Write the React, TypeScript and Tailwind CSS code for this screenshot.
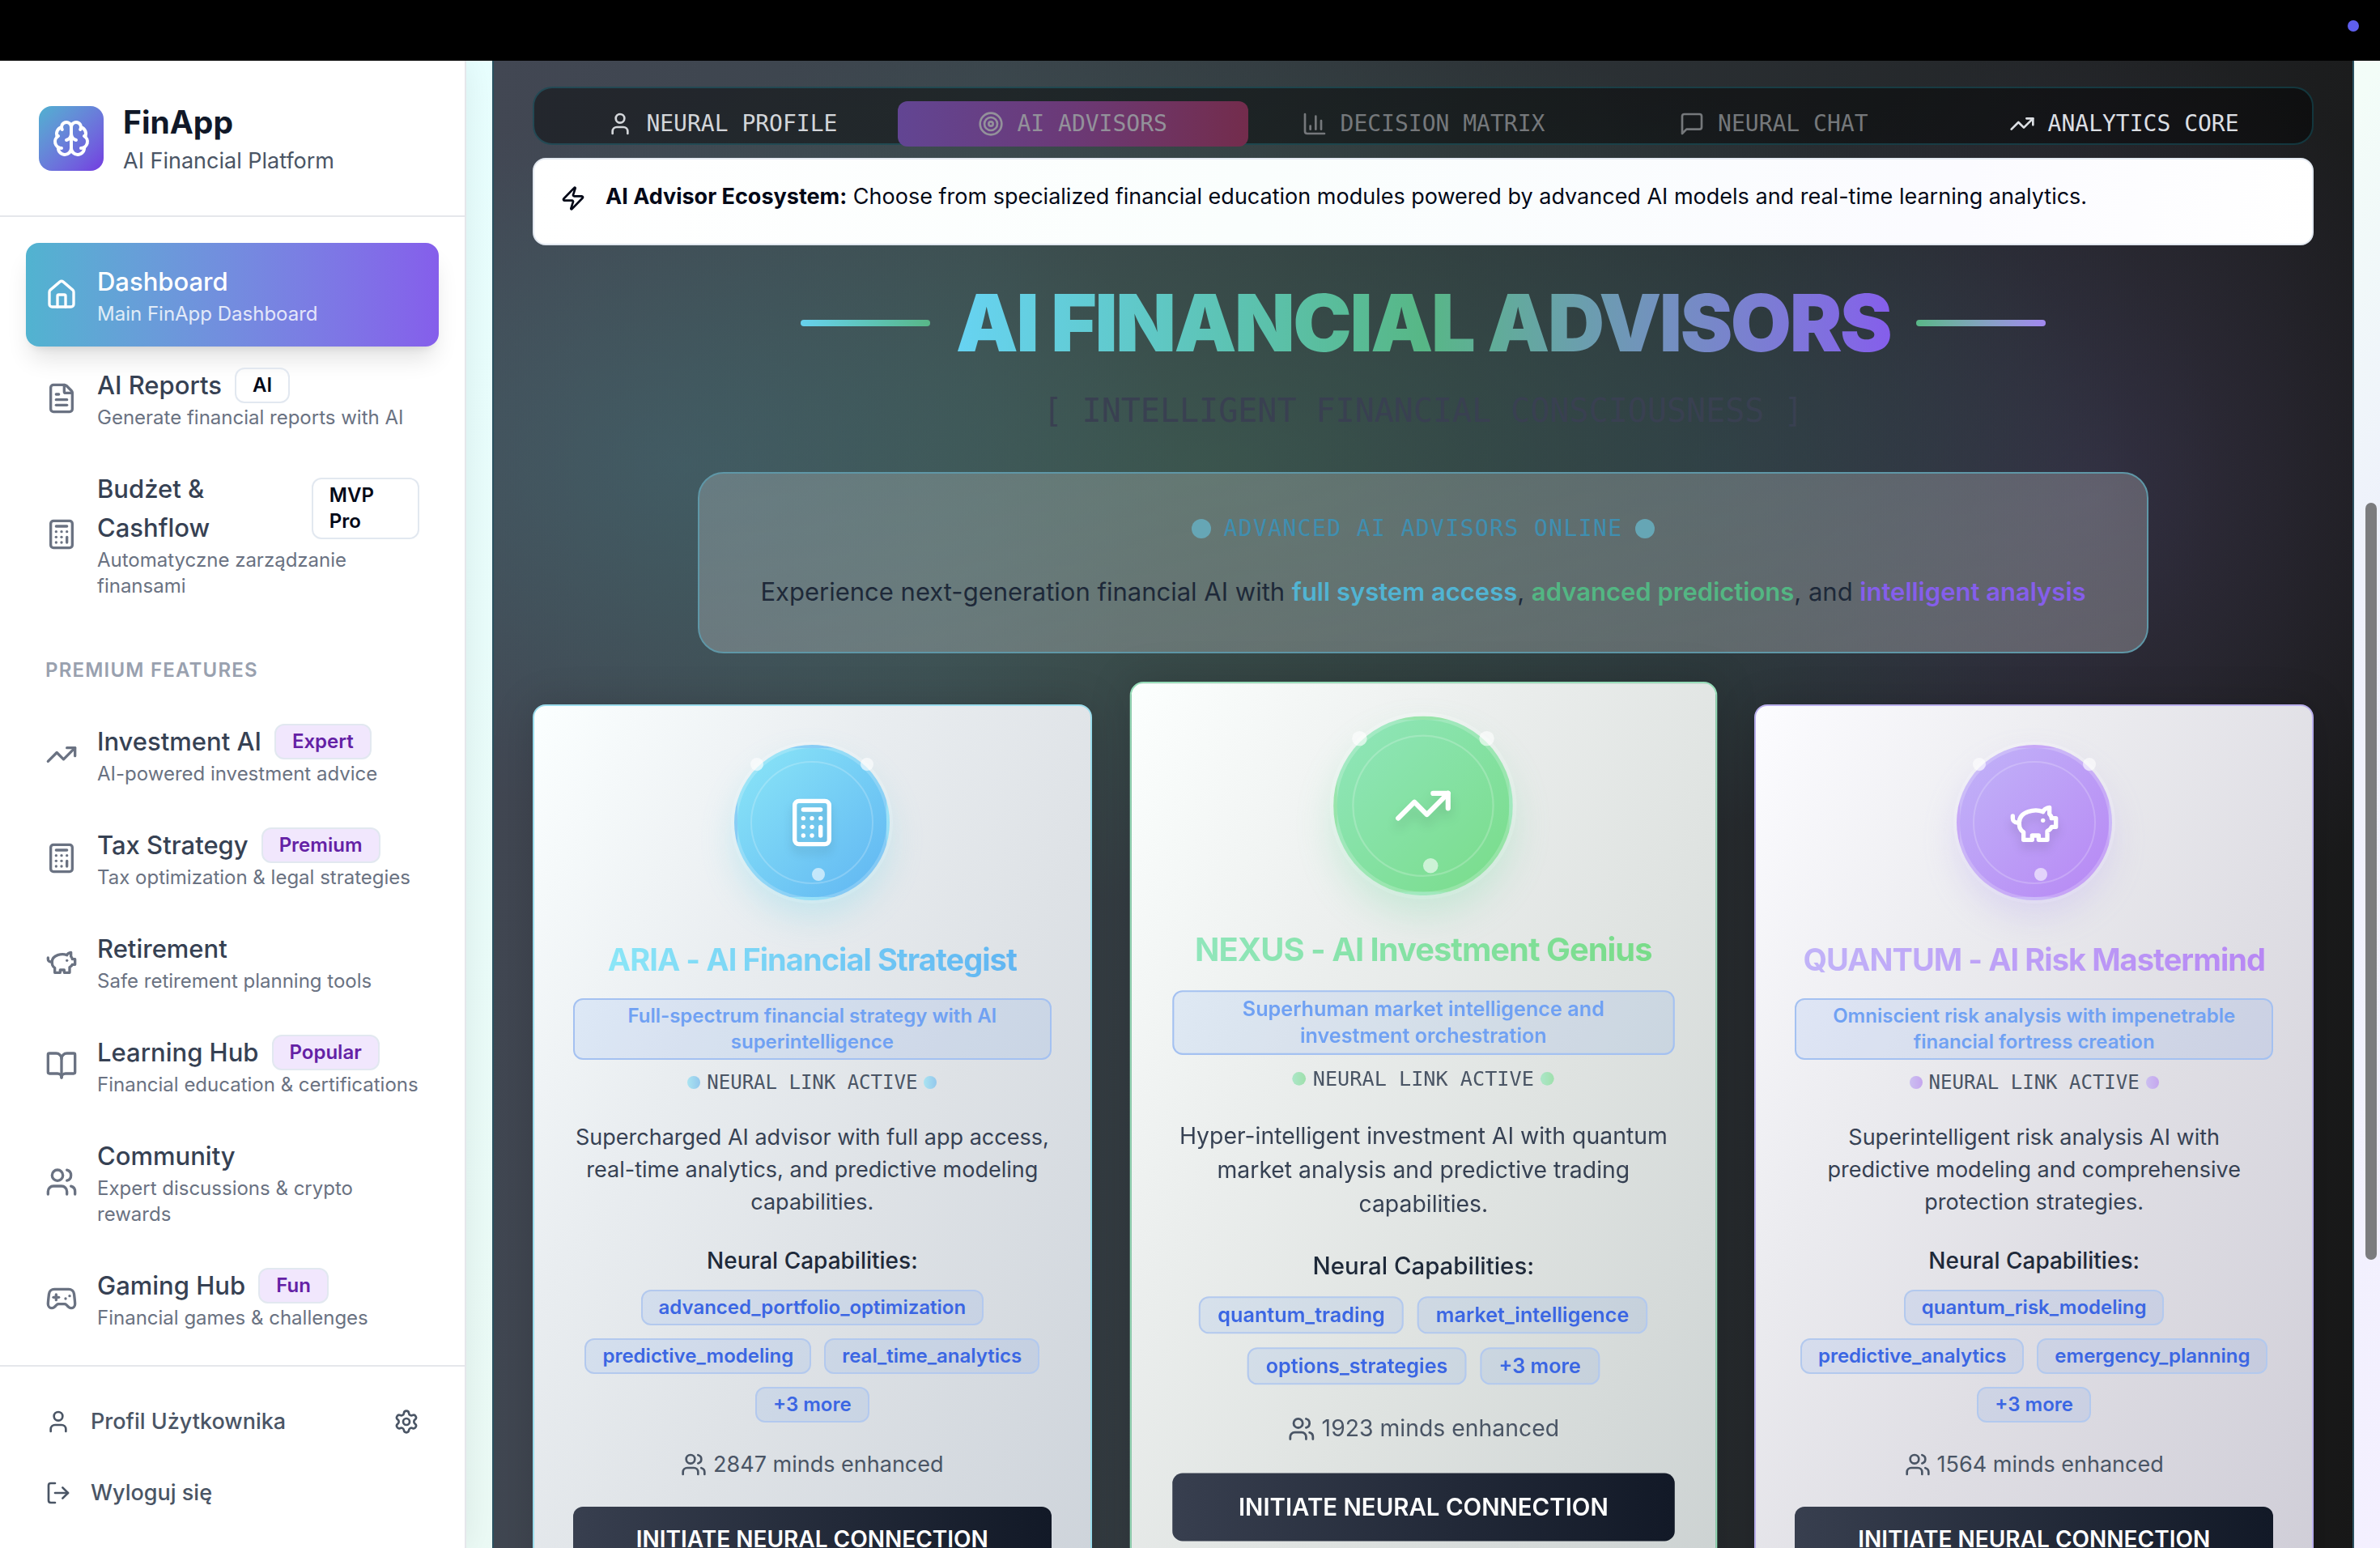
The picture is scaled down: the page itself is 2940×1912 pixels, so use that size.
import React from "react";
import {
  BookOpen,
  Brain,
  Calculator,
  ChartColumn,
  FileText,
  Gamepad2,
  House,
  LogOut,
  Settings,
  Target,
  TrendingUp,
  User,
  Users,
  Zap,
} from "lucide-react";
import clsx from "clsx";

type IconType = React.ComponentType<{ className?: string }>;

function PiggyBank({ className }: { className?: string }) {
  return (
    <svg
      viewBox="0 0 24 24"
      fill="none"
      stroke="currentColor"
      strokeWidth="2"
      strokeLinecap="round"
      strokeLinejoin="round"
      aria-hidden="true"
      className={className}
    >
      <path d="M19 5c-1.5 0-2.8 1.4-3 2-3.5-1.5-11-.3-11 5 0 1.8 0 3 2 4.5V20h4v-2h3v2h4v-4c1-.5 1.7-1 2-2h2v-4h-2c0-1-.5-1.5-1-2V5z" />
      <path d="M2 9v1c0 1.1.9 2 2 2h1" />
      <path d="M16 11h.01" />
    </svg>
  );
}

function MessageSquare({ className }: { className?: string }) {
  return (
    <svg
      viewBox="0 0 24 24"
      fill="none"
      stroke="currentColor"
      strokeWidth="2"
      strokeLinecap="round"
      strokeLinejoin="round"
      aria-hidden="true"
      className={className}
    >
      <path d="M21 15a2 2 0 0 1-2 2H7l-4 4V5a2 2 0 0 1 2-2h14a2 2 0 0 1 2 2z" />
    </svg>
  );
}

type NavEntry = {
  icon: IconType;
  title: string;
  description: string;
  badge?: string;
  active?: boolean;
  premium?: boolean;
};

const mainNav: NavEntry[] = [
  { icon: House, title: "Dashboard", description: "Main FinApp Dashboard", active: true },
  { icon: FileText, title: "AI Reports", description: "Generate financial reports with AI", badge: "AI" },
  { icon: Calculator, title: "Budżet & Cashflow", description: "Automatyczne zarządzanie finansami", badge: "MVP Pro" },
];

const premiumNav: NavEntry[] = [
  { icon: TrendingUp, title: "Investment AI", description: "AI-powered investment advice", badge: "Expert", premium: true },
  { icon: Calculator, title: "Tax Strategy", description: "Tax optimization & legal strategies", badge: "Premium", premium: true },
  { icon: PiggyBank, title: "Retirement", description: "Safe retirement planning tools", premium: true },
  { icon: BookOpen, title: "Learning Hub", description: "Financial education & certifications", badge: "Popular", premium: true },
  { icon: Users, title: "Community", description: "Expert discussions & crypto rewards", premium: true },
  { icon: Gamepad2, title: "Gaming Hub", description: "Financial games & challenges", badge: "Fun", premium: true },
];

function NavItem({ icon: Icon, title, description, badge, active, premium }: NavEntry) {
  return (
    <a
      href="#"
      className={clsx(
        "flex items-center gap-6 rounded-2xl p-6",
        active
          ? "bg-gradient-to-r from-[#51b3d0] to-[#855eeb] text-white shadow-[0_20px_30px_-6px_rgba(0,0,0,0.12),0_8px_12px_-8px_rgba(0,0,0,0.12)]"
          : "text-gray-700",
      )}
    >
      <Icon className={clsx("size-10 shrink-0", active ? "text-white" : "text-gray-500")} />
      <span className="flex min-w-0 flex-1 flex-col">
        <span className="flex items-center gap-4">
          <span className="text-[31px] leading-[48px] font-medium">{title}</span>
          {badge && (
            <span
              className={clsx(
                "rounded-xl border-2 border-slate-200 px-5 py-1 text-[24px] leading-[32px] font-semibold",
                premium ? "bg-[#f1e7fd] text-[#6421a5]" : "text-[#020817]",
              )}
            >
              {badge}
            </span>
          )}
        </span>
        <span className={clsx("text-[24px] leading-[32px]", active ? "text-white/80" : "text-gray-500")}>
          {description}
        </span>
      </span>
    </a>
  );
}

function Sidebar() {
  return (
    <aside className="relative z-10 flex w-[576px] shrink-0 flex-col border-r-2 border-gray-200 bg-white shadow-[0_0_40px_rgba(0,0,0,0.08)]">
      <div className="flex items-center gap-6 border-b-2 border-gray-200 px-12 pt-12 pb-[47px]">
        <div className="flex size-20 items-center justify-center rounded-2xl bg-gradient-to-br from-[#4fb1d0] to-[#7339e0] text-white">
          <Brain className="size-12" />
        </div>
        <div>
          <h2 className="text-[39px] leading-[56px] font-bold text-gray-900">FinApp</h2>
          <p className="text-[27px] leading-[40px] text-gray-600">AI Financial Platform</p>
        </div>
      </div>
      <nav className="min-h-0 flex-1 overflow-hidden p-8">
        {mainNav.map((item) => (
          <NavItem key={item.title} {...item} />
        ))}
        <h3 className="mt-12 mb-6 px-6 text-[24px] leading-[32px] font-semibold tracking-wider text-gray-400 uppercase">
          Premium Features
        </h3>
        {premiumNav.map((item) => (
          <NavItem key={item.title} {...item} />
        ))}
      </nav>
      <div className="border-t-2 border-gray-200 p-6">
        <button type="button" className="flex w-full items-center gap-6 px-8 py-6 text-[27px] leading-[40px] font-medium text-gray-600">
          <User className="size-8" />
          <span className="flex-1 text-left">Profil Użytkownika</span>
          <Settings className="size-8" />
        </button>
        <button type="button" className="flex w-full items-center gap-6 px-8 py-6 text-[27px] leading-[40px] font-medium text-gray-600">
          <LogOut className="size-8" />
          <span>Wyloguj się</span>
        </button>
      </div>
    </aside>
  );
}

const tabs: { icon: IconType; label: string; state: string; active?: boolean }[] = [
  { icon: User, label: "NEURAL PROFILE", state: "text-[#d3d6da]" },
  {
    icon: Target,
    label: "AI ADVISORS",
    state: "bg-gradient-to-r from-[#624593] via-[#6b3976] to-[#732c4c] text-[#93919a]",
    active: true,
  },
  { icon: ChartColumn, label: "DECISION MATRIX", state: "text-[#75787b]" },
  { icon: MessageSquare, label: "NEURAL CHAT", state: "text-[#75787b]" },
  { icon: TrendingUp, label: "ANALYTICS CORE", state: "text-[#dcdfe3]" },
];

type Advisor = {
  icon: IconType;
  name: string;
  role: string;
  text: string;
  skills: string[];
  minds: number;
  card: string;
  tone: string;
  dot: string;
  glow: string;
  featured?: boolean;
};

const advisors: Advisor[] = [
  {
    icon: Calculator,
    name: "ARIA - AI Financial Strategist",
    role: "Full-spectrum financial strategy with AI superintelligence",
    text: "Supercharged AI advisor with full app access, real-time analytics, and predictive modeling capabilities.",
    skills: ["advanced_portfolio_optimization", "predictive_modeling", "real_time_analytics", "+3 more"],
    minds: 2847,
    card: "border-[#9adcec] bg-[linear-gradient(120deg,#fbffff_0%,#e9edf0_32%,#dee2e6_58%,#cdd3da_100%)]",
    tone: "from-[#8be6f7] to-[#60b5f2]",
    dot: "from-[#aae4f1] to-[#93c7ec]",
    glow: "shadow-[0_20px_40px_rgba(103,213,233,0.28),0_0_0_4px_rgba(255,255,255,0.25)]",
  },
  {
    icon: TrendingUp,
    name: "NEXUS - AI Investment Genius",
    role: "Superhuman market intelligence and investment orchestration",
    text: "Hyper-intelligent investment AI with quantum market analysis and predictive trading capabilities.",
    skills: ["quantum_trading", "market_intelligence", "options_strategies", "+3 more"],
    minds: 1923,
    card: "border-[#97ddb9] bg-[linear-gradient(120deg,#fcfffe_0%,#ebeeed_32%,#dfe3e1_58%,#cbd1d1_100%)]",
    tone: "from-[#90e6bb] to-[#79dc89]",
    dot: "from-[#ace6c8] to-[#9fe0ac]",
    glow: "shadow-[0_20px_40px_rgba(110,220,160,0.28),0_0_0_4px_rgba(255,255,255,0.25)]",
    featured: true,
  },
  {
    icon: PiggyBank,
    name: "QUANTUM - AI Risk Mastermind",
    role: "Omniscient risk analysis with impenetrable financial fortress creation",
    text: "Superintelligent risk analysis AI with predictive modeling and comprehensive protection strategies.",
    skills: ["quantum_risk_modeling", "predictive_analytics", "emergency_planning", "+3 more"],
    minds: 1564,
    card: "border-[#b9aeec] bg-[linear-gradient(120deg,#fcfcff_0%,#ebebef_32%,#dfdee4_58%,#cfcdd7_100%)]",
    tone: "from-[#c1b3f8] to-[#b787f4]",
    dot: "from-[#cbbff0] to-[#c5a6ee]",
    glow: "shadow-[0_20px_40px_rgba(180,160,245,0.28),0_0_0_4px_rgba(255,255,255,0.25)]",
  },
];

function AdvisorCard({ icon: Icon, name, role, text, skills, minds, card, tone, dot, glow, featured }: Advisor) {
  return (
    <article
      className={clsx(
        "flex flex-col items-center rounded-2xl border-2 p-12 text-center shadow-[0_0_50px_rgba(0,0,0,0.15)]",
        card,
        featured && "scale-105",
      )}
    >
      <div
        className={clsx(
          "relative flex size-48 items-center justify-center rounded-full border-4 border-white/20 bg-gradient-to-br",
          tone,
          glow,
          featured && "scale-110",
        )}
      >
        <span className="absolute inset-4 rounded-full border-2 border-white/20" />
        <Icon className="size-16 text-white drop-shadow-[0_8px_6px_rgba(0,0,0,0.12)]" />
        <span className="absolute top-3 left-4 size-4 rounded-full bg-white/60" />
        <span className="absolute top-3 right-4 size-4 rounded-full bg-white/60" />
        <span className="absolute bottom-5 left-[92px] size-4 rounded-full bg-white/60" />
      </div>
      <h3
        className={clsx(
          "mt-[45px] bg-gradient-to-r bg-clip-text text-[38px] leading-[56px] font-bold tracking-tight whitespace-nowrap text-transparent",
          tone,
        )}
      >
        {name}
      </h3>
      <p className="mt-5 w-full rounded-xl border-2 border-[#a4c1f1] bg-[#3b82f6]/10 px-5 py-1 text-[24px] leading-[32px] font-semibold text-[#70a1f3]">
        {role}
      </p>
      <p className="mt-3 flex items-center gap-2 font-['DejaVu_Sans_Mono',monospace] text-[24px] leading-[32px] text-gray-600">
        <span className={clsx("size-4 rounded-full bg-gradient-to-r", dot)} />
        NEURAL LINK ACTIVE
        <span className={clsx("size-4 rounded-full bg-gradient-to-r", dot)} />
      </p>
      <p className="mt-8 text-[27px] leading-[40px] text-gray-700">{text}</p>
      <h4 className="mt-8 text-[28px] leading-[40px] font-medium text-gray-800">Neural Capabilities:</h4>
      <ul className="mt-4 flex flex-wrap justify-center gap-4">
        {skills.map((skill) => (
          <li
            key={skill}
            className="rounded-xl border-2 border-[#b3c9ee] bg-[#3b82f6]/10 px-5 py-1 text-[24px] leading-[32px] font-semibold text-[#3b66e3]"
          >
            {skill}
          </li>
        ))}
      </ul>
      <p className="mt-8 flex items-center gap-2 text-[27px] leading-[40px] text-gray-600">
        <Users className="size-8" />
        {minds} minds enhanced
      </p>
      <button
        type="button"
        className="mt-8 h-20 w-full rounded-xl bg-gradient-to-r from-[#383f4f] to-[#121927] text-[28px] leading-[40px] font-semibold text-white"
      >
        INITIATE NEURAL CONNECTION
      </button>
    </article>
  );
}

function AdvisorPanel() {
  return (
    <section className="mx-8 min-w-0 border-x-2 border-[#2b5160] bg-[radial-gradient(ellipse_620px_440px_at_10%_26%,rgba(70,125,145,0.26),transparent),radial-gradient(ellipse_1150px_540px_at_38%_26%,rgba(70,125,98,0.38),transparent),radial-gradient(ellipse_620px_460px_at_66%_26%,rgba(52,72,100,0.3),transparent),radial-gradient(ellipse_500px_560px_at_86%_28%,rgba(76,64,104,0.4),transparent),linear-gradient(95deg,#424753_0%,#3b454c_25%,#2d3337_50%,#24272a_75%,#181818_100%)] px-12 pt-8">
      <div role="tablist" className="grid h-[72px] grid-cols-5 rounded-3xl border-2 border-[#22d3ee]/20 bg-black/45 p-4">
        {tabs.map(({ icon: Icon, label, state, active }) => (
          <button
            key={label}
            type="button"
            role="tab"
            aria-selected={!!active}
            className={clsx(
              "flex h-14 items-center justify-center gap-4 rounded-xl font-['DejaVu_Sans_Mono',monospace] text-[28px] leading-[40px] whitespace-nowrap",
              state,
            )}
          >
            <Icon className="size-8" />
            {label}
          </button>
        ))}
      </div>

      <div
        role="alert"
        className="mt-4 flex items-start gap-6 rounded-2xl border-2 border-slate-200 bg-[linear-gradient(100deg,#ffffff,#fafefd_40%,#fbfbff_80%,#ffffff)] px-8 pt-[26px] pb-[38px] text-[#020817]"
      >
        <Zap className="mt-1.5 size-8 shrink-0" />
        <p className="text-[27px] leading-[40px]">
          <strong className="font-bold">AI Advisor Ecosystem:</strong> Choose from specialized financial education
          modules powered by advanced AI models and real-time learning analytics.
        </p>
      </div>

      <div className="mt-12 flex items-center justify-center gap-8">
        <span className="h-2 w-40 rounded-full bg-gradient-to-r from-[#67d1ee] to-[#58b787]" />
        <h1 className="bg-gradient-to-r from-[#67d3f2] via-[#57b786] to-[#855eeb] bg-clip-text text-[97px] leading-[96px] font-black tracking-tight whitespace-nowrap text-transparent">
          AI FINANCIAL ADVISORS
        </h1>
        <span className="h-2 w-40 rounded-full bg-gradient-to-r from-[#58b787] to-[#a288f0]" />
      </div>
      <p className="mt-8 text-center font-['DejaVu_Sans_Mono',monospace] text-[40px] leading-[56px] text-[#394051]">
        [ INTELLIGENT FINANCIAL CONSCIOUSNESS ]
      </p>

      <div className="mx-auto mt-12 max-w-[1792px] rounded-[32px] border-2 border-[#5f97a7] bg-gradient-to-br from-white/20 to-white/25 px-12 py-12 text-center">
        <p className="flex items-center justify-center gap-4 font-['DejaVu_Sans_Mono',monospace] text-[28px] leading-[40px] tracking-wider text-[#3f8fb1]">
          <span className="size-6 rounded-full bg-[#66a6b5]" />
          ADVANCED AI ADVISORS ONLINE
          <span className="size-6 rounded-full bg-[#66a6b5]" />
        </p>
        <p className="mt-8 text-[31px] leading-[52px] text-gray-800">
          Experience next-generation financial AI with{" "}
          <strong className="font-semibold text-[#51b4d3]">full system access</strong>,{" "}
          <strong className="font-semibold text-[#53b683]">advanced predictions</strong>, and{" "}
          <strong className="font-semibold text-[#855eeb]">intelligent analysis</strong>
        </p>
      </div>

      <div className="mt-[63px] grid grid-cols-3 gap-16">
        {advisors.map((advisor) => (
          <AdvisorCard key={advisor.name} {...advisor} />
        ))}
      </div>
    </section>
  );
}

export default function App() {
  return (
    <div className="flex h-screen flex-col overflow-hidden font-['Inter',sans-serif]">
      <header className="flex h-[75px] shrink-0 items-center justify-end bg-black px-[26px]">
        <span className="mb-3 size-3.5 rounded-full bg-[#5f5fee]" />
      </header>
      <div className="flex min-h-0 flex-1">
        <Sidebar />
        <main className="relative min-w-0 flex-1 overflow-hidden bg-[linear-gradient(120deg,#e8ffff_0%,#ebfaf5_31%,#f3fdf8_69%,#eef1fb_79%,#f4f0ff_100%)]">
          <AdvisorPanel />
          <div className="absolute top-[546px] right-1 h-[935px] w-3.5 rounded-full bg-[#7b7c7e]" />
        </main>
      </div>
    </div>
  );
}
